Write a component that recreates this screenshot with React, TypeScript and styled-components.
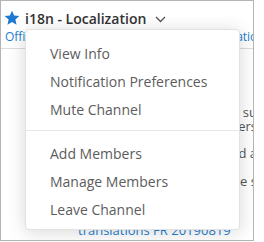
import React from "react";
import styled, { createGlobalStyle } from "styled-components";

const Global = createGlobalStyle`
  html, body { margin: 0; padding: 0; background: #ffffff; }
  body { font-family: "Open Sans", "Liberation Sans", sans-serif; }
`;

const Frame = styled.div`
  position: relative;
  width: 254px;
  height: 241px;
  box-sizing: border-box;
  border: 1px solid #b4b4b4;
  background: #ffffff;
  overflow: hidden;
`;

const Header = styled.div`
  display: flex;
  flex-direction: column;
  padding: 7px 0 0 3px;
  height: 48px;
  box-sizing: border-box;
  border-bottom: 1px solid #dcdcdc;
`;

const TitleRow = styled.div`
  display: flex;
  align-items: center;
  gap: 5px;
  height: 20px;
`;

const Title = styled.span`
  font-size: 14px;
  font-weight: 600;
  color: #333333;
  white-space: nowrap;
`;

const Subtitle = styled.div`
  padding-left: 1px;
  font-size: 12px;
  color: #1f7fd1;
  white-space: nowrap;
`;

const Content = styled.div`
  display: flex;
  flex-direction: column;
  width: 256px;
  box-sizing: border-box;
  padding: 56px 0 0 30px;
`;

const Line = styled.div<{ $gap?: number }>`
  margin-top: ${(p) => p.$gap ?? 0}px;
  font-size: 13px;
  line-height: 14px;
  white-space: nowrap;
  text-align: right;
  color: #555555;
`;

const Attachment = styled.div<{ $gap?: number }>`
  margin-top: ${(p) => p.$gap ?? 0}px;
  margin-left: 47px;
  font-size: 13px;
  line-height: 14px;
  white-space: nowrap;
  color: #1f7fd1;
`;

const Menu = styled.div`
  position: absolute;
  left: 24px;
  top: 28px;
  width: 215px;
  box-sizing: border-box;
  padding: 9px 0 6px;
  background: #ffffff;
  border: 1px solid #e2e2e2;
  border-radius: 4px;
  box-shadow: 0 2px 18px rgba(0, 0, 0, 0.16);
  display: flex;
  flex-direction: column;
`;

const Item = styled.div`
  height: 28px;
  display: flex;
  align-items: center;
  padding-left: 24px;
  font-size: 14px;
  color: #5c5c5c;
  white-space: nowrap;
`;

const Divider = styled.div`
  height: 1px;
  margin: 7px 0 8px;
  background: #e6e6e6;
`;

const Star = () => (
  <svg width="16" height="16" viewBox="0 0 24 24">
    <polygon
      points="12,1 15.2,8.2 23,9 17.1,14.3 18.8,22 12,18 5.2,22 6.9,14.3 1,9 8.8,8.2"
      fill="#1f78d1"
    />
  </svg>
);

const ChevronIcon = styled.svg`
  margin-left: 4px;
  margin-top: 1px;
`;

const Chevron = () => (
  <ChevronIcon width="11" height="10" viewBox="0 0 11 10">
    <path d="M1 3 L5.5 7.5 L10 3" fill="none" stroke="#555" strokeWidth="1.3" />
  </ChevronIcon>
);

export default function App() {
  return (
    <>
      <Global />
      <Frame>
        <Header>
          <TitleRow>
            <Star />
            <Title>i18n - Localization</Title>
            <Chevron />
          </TitleRow>
          <Subtitle>Official channel for localization and translation</Subtitle>
        </Header>
        <Content>
          <Line>New files are ready to be su</Line>
          <Line>for review by all team members</Line>
          <Line $gap={13}>Please check the strings and a</Line>
          <Line $gap={14}>confirm they look fine before e s</Line>
          <Attachment $gap={35}>translations FR 20190819</Attachment>
        </Content>
        <Menu>
          <Item>View Info</Item>
          <Item>Notification Preferences</Item>
          <Item>Mute Channel</Item>
          <Divider />
          <Item>Add Members</Item>
          <Item>Manage Members</Item>
          <Item>Leave Channel</Item>
        </Menu>
      </Frame>
    </>
  );
}
